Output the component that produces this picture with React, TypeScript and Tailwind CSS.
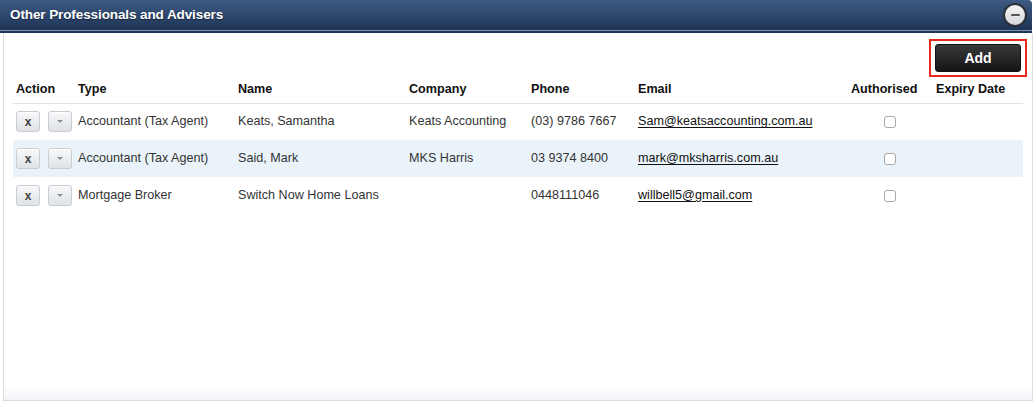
import React from "react";

type Row = {
  type: string;
  name: string;
  company: string;
  phone: string;
  email: string;
};

const rows: Row[] = [
  {
    type: "Accountant (Tax Agent)",
    name: "Keats, Samantha",
    company: "Keats Accounting",
    phone: "(03) 9786 7667",
    email: "Sam@keatsaccounting.com.au",
  },
  {
    type: "Accountant (Tax Agent)",
    name: "Said, Mark",
    company: "MKS Harris",
    phone: "03 9374 8400",
    email: "mark@mksharris.com.au",
  },
  {
    type: "Mortgage Broker",
    name: "Switch Now Home Loans",
    company: "",
    phone: "0448111046",
    email: "willbell5@gmail.com",
  },
];

function SmallBtn({ children }: { children: React.ReactNode }) {
  return (
    <div className="flex h-[21px] w-[24px] items-center justify-center rounded-[3px] border border-[#c9cdd2] bg-gradient-to-b from-[#f7f8f9] to-[#dfe2e6] shadow-[inset_0_1px_0_#fff]">
      {children}
    </div>
  );
}

export default function App() {
  return (
    <div
      className="relative h-[403px] w-[1036px] overflow-hidden bg-white"
      style={{ fontFamily: '"Liberation Sans", Arial, sans-serif' }}
    >
      {/* Header bar */}
      <div className="mr-[4px] flex h-[30px] items-center justify-between rounded-tr-[4px] bg-gradient-to-b from-[#3f5b83] to-[#1d3457] pl-[10px] pr-[5px]">
        <span className="text-[13.5px] font-bold leading-none tracking-[-0.1px] text-white [text-shadow:0_1px_1px_rgba(0,0,0,0.5)]">
          Other Professionals and Advisers
        </span>
        <div className="flex h-[24px] w-[24px] items-center justify-center rounded-full border-[2px] border-[#2b3038] bg-gradient-to-b from-[#f4f4f4] to-[#d6d8db]">
          <div className="h-[2px] w-[9px] rounded-[1px] bg-[#555]" />
        </div>
      </div>
      <div className="mr-[4px] h-[1px] bg-[#7f93ad]" />
      <div className="mr-[4px] h-[2px] bg-[#1e3558]" />

      {/* Panel body */}
      <div className="mx-[3px] flex h-[368px] flex-col border-x border-b border-[#dcdcdc] bg-gradient-to-b from-white from-[96%] to-[#f1f3f6]">
        <div className="mt-[6px] flex justify-end pr-[5px]">
          <div className="border-[2px] border-[#e8291c] px-[4px] py-[3px]">
            <div className="flex h-[28px] w-[86px] items-center justify-center rounded-[3px] border border-[#111] bg-gradient-to-b from-[#3a3a3a] to-[#151515] text-[14px] font-bold text-white">
              Add
            </div>
          </div>
        </div>

        <div className="ml-[9px] w-[1010px]">
          <table className="w-[1010px] table-fixed border-collapse text-[12.6px]">
            <colgroup>
              <col className="w-[62px]" />
              <col className="w-[160px]" />
              <col className="w-[171px]" />
              <col className="w-[122px]" />
              <col className="w-[107px]" />
              <col className="w-[213px]" />
              <col className="w-[85px]" />
              <col className="w-[90px]" />
            </colgroup>
            <thead>
              <tr className="h-[26px] border-b border-[#e1e1e1] text-left font-bold text-[#111]">
                <th className="pl-[3px] pb-[1px] align-middle">Action</th>
                <th className="pl-[3px] pb-[1px]">Type</th>
                <th className="pl-[3px] pb-[1px]">Name</th>
                <th className="pl-[3px] pb-[1px]">Company</th>
                <th className="pl-[3px] pb-[1px]">Phone</th>
                <th className="pl-[3px] pb-[1px]">Email</th>
                <th className="pl-[3px] pb-[1px]">Authorised</th>
                <th className="pl-[3px] pb-[1px]">Expiry Date</th>
              </tr>
            </thead>
            <tbody className="text-[#333]">
              {rows.map((r, i) => (
                <tr
                  key={i}
                  className={`h-[37px] ${i === 1 ? "bg-[#eaf3f9]" : "bg-transparent"}`}
                >
                  <td className="pl-[3px]">
                    <div className="flex gap-[8px]">
                      <SmallBtn>
                        <span className="text-[12px] font-bold leading-none text-[#444]">x</span>
                      </SmallBtn>
                      <SmallBtn>
                        <svg width="8" height="5" viewBox="0 0 8 5">
                          <path d="M1 1 L7 1 L4 4 Z" fill="#8a8f95" />
                        </svg>
                      </SmallBtn>
                    </div>
                  </td>
                  <td className="pl-[3px] whitespace-nowrap">{r.type}</td>
                  <td className="pl-[3px] whitespace-nowrap">{r.name}</td>
                  <td className="pl-[3px] whitespace-nowrap">{r.company}</td>
                  <td className="pl-[3px] whitespace-nowrap">{r.phone}</td>
                  <td className="pl-[3px] whitespace-nowrap">
                    <span className="text-[#111] underline underline-offset-[2px]">{r.email}</span>
                  </td>
                  <td>
                    <div className="flex justify-center pr-[2px]">
                      <div className="h-[12px] w-[12px] rounded-[3px] border border-[#a9a9a9] bg-white" />
                    </div>
                  </td>
                  <td />
                </tr>
              ))}
            </tbody>
          </table>
        </div>
      </div>
    </div>
  );
}
